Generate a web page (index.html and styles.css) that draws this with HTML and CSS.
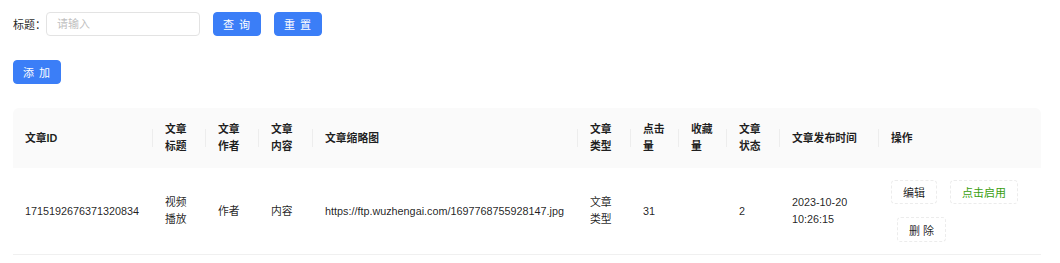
FILE: index.html
```html
<!DOCTYPE html>
<html lang="zh-CN">
<head>
  <meta charset="UTF-8">
  <meta name="viewport" content="width=device-width, initial-scale=1.0">
  <title>文章管理</title>
  <link rel="stylesheet" href="styles.css">
</head>
<body>

  <div class="search-row">
    <label class="search-label" for="titleInput">标题：</label>
    <input type="text" id="titleInput" class="search-input" placeholder="请输入" />
    <button class="btn btn-primary">查 询</button>
    <button class="btn btn-primary">重 置</button>
  </div>

  <div class="action-row">
    <button class="btn btn-primary">添 加</button>
  </div>

  <table class="article-table">
    <colgroup>
      <col style="width: 140px">
      <col style="width: 53px">
      <col style="width: 53px">
      <col style="width: 54px">
      <col style="width: 265px">
      <col style="width: 53px">
      <col style="width: 48px">
      <col style="width: 48px">
      <col style="width: 53px">
      <col style="width: 99px">
      <col style="width: 162px">
    </colgroup>
    <thead>
      <tr>
        <th>文章ID</th>
        <th>文章标题</th>
        <th>文章作者</th>
        <th>文章内容</th>
        <th>文章缩略图</th>
        <th>文章类型</th>
        <th>点击量</th>
        <th>收藏量</th>
        <th>文章状态</th>
        <th>文章发布时间</th>
        <th>操作</th>
      </tr>
    </thead>
    <tbody>
      <tr>
        <td>1715192676371320834</td>
        <td>视频播放</td>
        <td>作者</td>
        <td>内容</td>
        <td>https://ftp.wuzhengai.com/1697768755928147.jpg</td>
        <td>文章类型</td>
        <td>31</td>
        <td></td>
        <td>2</td>
        <td>2023-10-20 10:26:15</td>
        <td>
          <div class="ops">
            <button class="btn btn-dashed">编辑</button>
            <button class="btn btn-dashed btn-success">点击启用</button>
            <button class="btn btn-dashed btn-offset">删 除</button>
          </div>
        </td>
      </tr>
    </tbody>
  </table>

</body>
</html>
```
FILE: styles.css
```css
body {
  font-family: "Liberation Sans", "Noto Sans CJK SC", sans-serif;
  font-size: 11px;
  color: rgba(0, 0, 0, 0.88);
  background-color: #fff;
  margin: 0;
  padding: 12px 13px;
}

.search-row {
  display: flex;
  align-items: center;
  height: 24px;
}

.search-label {
  width: 33px;
}

.search-input {
  width: 154px;
  height: 24px;
  box-sizing: border-box;
  padding: 0 10px;
  font-family: inherit;
  font-size: 11px;
  border: 1px solid #e3e3e3;
  border-radius: 4px;
  outline: none;
  margin-right: 13px;
}

.search-input::placeholder {
  color: #bfbfbf;
}

.action-row {
  margin-top: 24px;
  height: 24px;
}

.btn {
  font-family: inherit;
  font-size: 11px;
  height: 24px;
  box-sizing: border-box;
  padding: 0 11px;
  border-radius: 4px;
  cursor: pointer;
  white-space: nowrap;
}

.btn-primary {
  width: 48px;
  padding: 0;
  background-color: #3b7ef7;
  border: 1px solid #3b7ef7;
  color: #fff;
  letter-spacing: 1px;
  margin-right: 13px;
}

.btn-dashed {
  background-color: #fff;
  border: 1px dashed #ececec;
  color: rgba(0, 0, 0, 0.88);
}

.btn-success {
  color: #389e0d;
}

.btn-offset {
  margin-left: 6px;
  height: 25px;
}

.article-table {
  margin-top: 24px;
  width: 1028px;
  table-layout: fixed;
  border-collapse: separate;
  border-spacing: 0;
  font-size: 10.8px;
  line-height: 17px;
}

.article-table th,
.article-table td {
  text-align: left;
  word-break: normal;
}

.article-table th {
  position: relative;
  background-color: #fafafa;
  font-weight: 600;
  padding: 13px 12px;
}

.article-table th:first-child {
  border-top-left-radius: 6px;
}

.article-table th:last-child {
  border-top-right-radius: 6px;
}

/* column separators in the header */
.article-table th:not(:last-child)::before {
  content: "";
  position: absolute;
  top: 50%;
  right: 0;
  width: 1px;
  height: 18px;
  transform: translateY(-50%);
  background-color: rgba(0, 0, 0, 0.05);
}

.article-table td {
  padding: 12px;
  border-bottom: 1px solid #f0f0f0;
  vertical-align: middle;
}

.ops {
  display: flex;
  flex-wrap: wrap;
  gap: 13px;
}
```
